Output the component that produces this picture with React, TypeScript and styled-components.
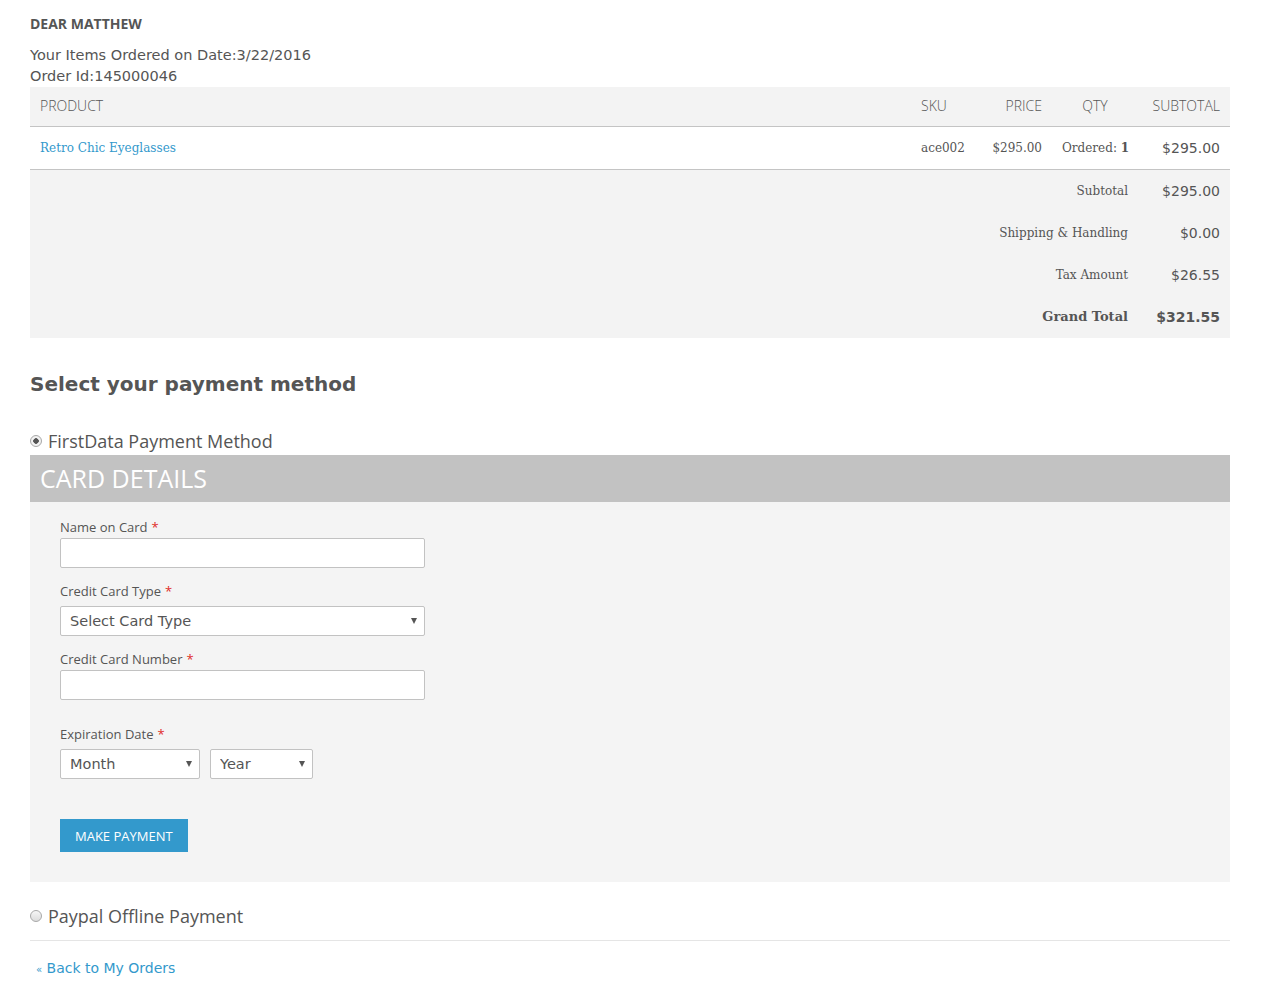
import React from "react"
import styled, { createGlobalStyle } from "styled-components"

const GlobalStyle = createGlobalStyle`
  body {
    margin: 0;
    background: #ffffff;
    color: #555555;
    font-family: "Open Sans", sans-serif;
  }
`

const SANS = `"Open Sans", "Liberation Sans", sans-serif`
const VERDANA = `"DejaVu Sans", Verdana, sans-serif`
const GEORGIA = `"DejaVu Serif", Georgia, serif`
const BLUE = "#3399cc"

const Page = styled.div`
  width: 1200px;
  padding: 10px 38px 0 30px;
`

const Greeting = styled.h3`
  margin: 0;
  height: 28px;
  line-height: 28px;
  font-family: ${SANS};
  font-size: 14px;
  font-weight: 700;
  color: #555;
`

const OrderInfo = styled.div`
  margin-top: 7px;
  font-family: ${VERDANA};
  font-size: 14.5px;
  line-height: 21px;
  color: #555;
`

const Table = styled.div`
  display: grid;
  grid-template-columns: 1fr 67px 74px 86px 92px;
`

const HeadCell = styled.div<{ align?: string }>`
  height: 39px;
  line-height: 38px;
  background: #f3f3f3;
  border-bottom: 1px solid #c4c4c4;
  padding: 0 10px;
  font-family: ${SANS};
  font-size: 14px;
  font-weight: 300;
  color: #555;
  text-transform: uppercase;
  text-align: ${(p) => p.align || "left"};
`

const BodyCell = styled.div<{ align?: string; mono?: boolean }>`
  height: 42px;
  line-height: 42px;
  border-bottom: 1px solid #c4c4c4;
  padding: 0 10px;
  font-family: ${(p) => (p.mono ? VERDANA : GEORGIA)};
  font-size: ${(p) => (p.mono ? "14px" : "12px")};
  color: #555;
  white-space: nowrap;
  text-align: ${(p) => p.align || "left"};
`

const ProductLink = styled.a`
  color: ${BLUE};
  text-decoration: none;
`

const Totals = styled.div`
  display: grid;
  grid-template-columns: 1fr 92px;
  background: #f3f3f3;
`

const TotalLabel = styled.div<{ strong?: boolean }>`
  height: 42px;
  line-height: 42px;
  padding-right: 10px;
  text-align: right;
  font-family: ${GEORGIA};
  font-size: ${(p) => (p.strong ? "13px" : "12px")};
  font-weight: ${(p) => (p.strong ? 700 : 400)};
  color: #555;
`

const TotalValue = styled.div<{ strong?: boolean }>`
  height: 42px;
  line-height: 42px;
  padding-right: 10px;
  text-align: right;
  font-family: ${VERDANA};
  font-size: 14px;
  font-weight: ${(p) => (p.strong ? 700 : 400)};
  color: #555;
`

const SectionTitle = styled.h2`
  margin: 32px 0 0;
  height: 28px;
  line-height: 28px;
  font-family: ${VERDANA};
  font-size: 20px;
  font-weight: 700;
  color: #555;
`

const MethodRow = styled.label`
  display: flex;
  align-items: center;
  gap: 6px;
  height: 28px;
  font-family: ${SANS};
  font-size: 18px;
  color: #555;
`

const MethodFirst = styled(MethodRow)`
  margin-top: 29px;
`

const MethodPaypal = styled(MethodRow)`
  margin-top: 20px;
  padding-bottom: 10px;
  border-bottom: 1px solid #e5e5e5;
`

const Radio = styled.span<{ checked?: boolean }>`
  box-sizing: border-box;
  width: 12px;
  height: 12px;
  border-radius: 50%;
  border: 1px solid #a8a8a8;
  background: ${(p) =>
    p.checked
      ? "radial-gradient(circle, #555 0 2.5px, #f2f2f2 3px)"
      : "linear-gradient(#f6f6f6, #dcdcdc)"};
  flex: none;
`

const CardHeader = styled.div`
  height: 47px;
  line-height: 47px;
  background: #c2c2c2;
  padding-left: 10px;
  font-family: ${SANS};
  font-size: 25px;
  color: #ffffff;
  text-transform: uppercase;
`

const CardBody = styled.div`
  background: #f4f4f4;
  padding: 15px 30px 30px;
`

const Field = styled.div<{ gap?: number }>`
  margin-bottom: ${(p) => p.gap ?? 13}px;
`

const Label = styled.div`
  font-family: ${SANS};
  font-size: 13px;
  line-height: 21px;
  color: #555;
`

const Required = styled.span`
  color: #e02b27;
  margin-left: 4px;
`

const TextInput = styled.input`
  box-sizing: border-box;
  display: block;
  width: 365px;
  height: 30px;
  margin: 0;
  border: 1px solid #c2c2c2;
  border-radius: 2px;
  background: #fff;
`

const SelectWrap = styled.div<{ width: number }>`
  position: relative;
  width: ${(p) => p.width}px;
  &::after {
    content: "";
    position: absolute;
    right: 8px;
    top: 12px;
    border-left: 3.5px solid transparent;
    border-right: 3.5px solid transparent;
    border-top: 6px solid #555;
    pointer-events: none;
  }
`

const Select = styled.select`
  box-sizing: border-box;
  display: block;
  appearance: none;
  width: 100%;
  height: 30px;
  margin: 0;
  padding: 0 9px;
  border: 1px solid #c2c2c2;
  border-radius: 2px;
  background: #fff;
  font-family: ${VERDANA};
  font-size: 14.5px;
  color: #555;
`

const SelectRow = styled.div`
  display: flex;
  gap: 10px;
  padding-top: 4px;
`

const PayButton = styled.button`
  display: block;
  margin-top: 40px;
  height: 33px;
  padding: 0 15px;
  border: none;
  background: ${BLUE};
  color: #fff;
  font-family: ${SANS};
  font-size: 13px;
  text-transform: uppercase;
  cursor: pointer;
`

const BackLink = styled.a`
  display: block;
  margin: 19px 0 0 6px;
  font-family: ${VERDANA};
  font-size: 14px;
  color: ${BLUE};
  text-decoration: none;
`

const Small = styled.span`
  font-size: 10px;
`

const totals = [
  { label: "Subtotal", value: "$295.00" },
  { label: "Shipping & Handling", value: "$0.00" },
  { label: "Tax Amount", value: "$26.55" },
  { label: "Grand Total", value: "$321.55", strong: true },
]

const App: React.FC = () => {
  return (
    <Page>
      <GlobalStyle />
      <Greeting>DEAR MATTHEW</Greeting>
      <OrderInfo>
        Your Items Ordered on Date:3/22/2016
        <br />
        Order Id:145000046
      </OrderInfo>

      <Table>
        <HeadCell>Product</HeadCell>
        <HeadCell>SKU</HeadCell>
        <HeadCell align="right">Price</HeadCell>
        <HeadCell align="center">Qty</HeadCell>
        <HeadCell align="right">Subtotal</HeadCell>

        <BodyCell>
          <ProductLink href="#">Retro Chic Eyeglasses</ProductLink>
        </BodyCell>
        <BodyCell>ace002</BodyCell>
        <BodyCell align="right">$295.00</BodyCell>
        <BodyCell align="center">
          Ordered: <b>1</b>
        </BodyCell>
        <BodyCell align="right" mono>
          $295.00
        </BodyCell>
      </Table>

      <Totals>
        {totals.map((t) => (
          <React.Fragment key={t.label}>
            <TotalLabel strong={t.strong}>{t.label}</TotalLabel>
            <TotalValue strong={t.strong}>{t.value}</TotalValue>
          </React.Fragment>
        ))}
      </Totals>

      <SectionTitle>Select your payment method</SectionTitle>

      <MethodFirst>
        <Radio checked />
        FirstData Payment Method
      </MethodFirst>
      <CardHeader>Card Details</CardHeader>
      <CardBody>
        <Field>
          <Label>
            Name on Card<Required>*</Required>
          </Label>
          <TextInput type="text" />
        </Field>
        <Field>
          <Label>
            Credit Card Type<Required>*</Required>
          </Label>
          <SelectRow>
            <SelectWrap width={365}>
              <Select defaultValue="">
                <option value="">Select Card Type</option>
              </Select>
            </SelectWrap>
          </SelectRow>
        </Field>
        <Field gap={24}>
          <Label>
            Credit Card Number<Required>*</Required>
          </Label>
          <TextInput type="text" />
        </Field>
        <Field gap={0}>
          <Label>
            Expiration Date<Required>*</Required>
          </Label>
          <SelectRow>
            <SelectWrap width={140}>
              <Select defaultValue="">
                <option value="">Month</option>
              </Select>
            </SelectWrap>
            <SelectWrap width={103}>
              <Select defaultValue="">
                <option value="">Year</option>
              </Select>
            </SelectWrap>
          </SelectRow>
        </Field>
        <PayButton>Make Payment</PayButton>
      </CardBody>

      <MethodPaypal>
        <Radio />
        Paypal Offline Payment
      </MethodPaypal>
      <BackLink href="#">
        <Small>«</Small> Back to My Orders
      </BackLink>
    </Page>
  )
}

export default App
